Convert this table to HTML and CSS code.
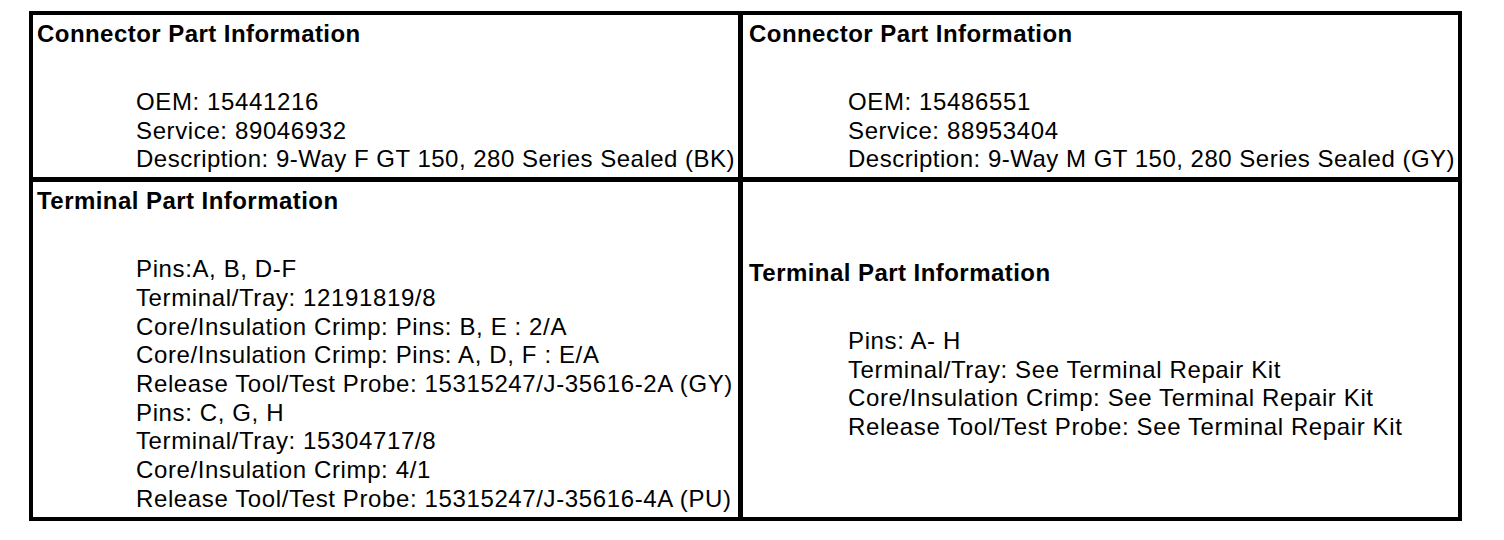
FILE: index.html
```html
<!DOCTYPE html>
<html>
<head>
<meta charset="utf-8">
<link rel="stylesheet" href="styles.css">
</head>
<body>
<div class="sheet">
  <div class="cell">
    <div class="content">
      <div class="head">Connector Part Information</div>
      <div class="list">
        <div>OEM: 15441216</div>
        <div>Service: 89046932</div>
        <div class="desc">Description: 9-Way F GT 150, 280 Series Sealed (BK)</div>
      </div>
    </div>
  </div>
  <div class="cell">
    <div class="content">
      <div class="head">Connector Part Information</div>
      <div class="list">
        <div>OEM: 15486551</div>
        <div>Service: 88953404</div>
        <div class="desc">Description: 9-Way M GT 150, 280 Series Sealed (GY)</div>
      </div>
    </div>
  </div>
  <div class="cell">
    <div class="content">
      <div class="head">Terminal Part Information</div>
      <div class="list">
        <div>Pins:A, B, D-F</div>
        <div>Terminal/Tray: 12191819/8</div>
        <div>Core/Insulation Crimp: Pins: B, E : 2/A</div>
        <div>Core/Insulation Crimp: Pins: A, D, F : E/A</div>
        <div>Release Tool/Test Probe: 15315247/J-35616-2A (GY)</div>
        <div>Pins: C, G, H</div>
        <div>Terminal/Tray: 15304717/8</div>
        <div>Core/Insulation Crimp: 4/1</div>
        <div>Release Tool/Test Probe: 15315247/J-35616-4A (PU)</div>
      </div>
    </div>
  </div>
  <div class="cell">
    <div class="content">
      <div class="head">Terminal Part Information</div>
      <div class="list">
        <div>Pins: A- H</div>
        <div>Terminal/Tray: See Terminal Repair Kit</div>
        <div>Core/Insulation Crimp: See Terminal Repair Kit</div>
        <div>Release Tool/Test Probe: See Terminal Repair Kit</div>
      </div>
    </div>
  </div>
</div>
</body>
</html>
```
FILE: styles.css
```css
html, body {
  margin: 0;
  padding: 0;
  background: #fff;
}
body {
  padding: 11px 0 0 29px;
  font-family: "Liberation Sans", Arial, sans-serif;
  font-size: 24px;
  color: #000;
}
.sheet {
  display: grid;
  grid-template-columns: 705px 715px;
  grid-template-rows: 162px 335px;
  gap: 5px;
  padding: 4px;
  background: #000;
  width: 1425px;
}
.cell {
  background: #fff;
  display: flex;
  align-items: center;
  padding: 2px 0 0 4px;
}
.cell:nth-child(even) {
  padding-left: 6px;
}
.content {
  line-height: 28.7px;
  white-space: nowrap;
}
.head {
  font-weight: bold;
  letter-spacing: 0.45px;
}
.list {
  margin-top: 39px;
  padding-left: 99px;
  letter-spacing: 0.62px;
}
.list .desc {
  letter-spacing: 0.5px;
}
```
